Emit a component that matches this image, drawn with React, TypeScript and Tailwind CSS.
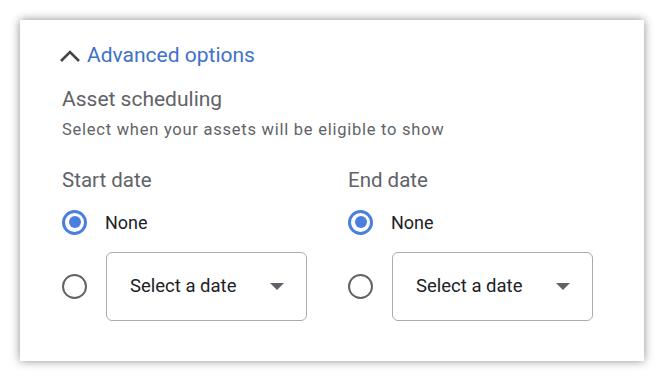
import React from "react";

function Radio({ checked }: { checked: boolean }) {
  return checked ? (
    <span className="flex h-[25px] w-[25px] shrink-0 items-center justify-center rounded-full border-[3px] border-[#4a7fe0]">
      <span className="h-[12px] w-[12px] rounded-full bg-[#4a7fe0]" />
    </span>
  ) : (
    <span className="h-[25px] w-[25px] shrink-0 rounded-full border-[2.5px] border-[#606368]" />
  );
}

function DateColumn({ label }: { label: string }) {
  return (
    <div className="flex w-[286px] flex-col">
      <div className="text-[20.5px] leading-[24px] text-[#5f6368]">{label}</div>
      <div className="mt-[16px] flex h-[28px] items-center">
        <Radio checked />
        <span className="ml-[18px] text-[18px] text-[#202124]">None</span>
      </div>
      <div className="mt-[16px] flex items-center">
        <Radio checked={false} />
        <div className="ml-[19px] flex h-[69px] w-[201px] items-center justify-between rounded-[6px] border border-[#a8abb0] pl-[23px] pr-[22px]">
          <span className="text-[18.5px] text-[#202124]">Select a date</span>
          <svg width="14" height="7" viewBox="0 0 14 7">
            <path d="M0 0 L14 0 L7 7 Z" fill="#5f6368" />
          </svg>
        </div>
      </div>
    </div>
  );
}

export default function App() {
  return (
    <div className="h-[381px] w-[664px] bg-white pl-[20px] pt-[20px] font-['Roboto',sans-serif]">
      <div className="flex h-[341px] w-[624px] flex-col bg-white pl-[42px] pt-[24px] shadow-[0_0_9px_rgba(0,0,0,0.45)]">
        {/* Toggle */}
        <div className="flex h-[24px] items-center">
          <svg width="22" height="14" viewBox="0 0 22 14" className="-ml-[3px]">
            <path d="M2 12 L11 3 L20 12" fill="none" stroke="#454545" strokeWidth="2.6" />
          </svg>
          <span className="ml-[6px] text-[21px] text-[#3d72c9]">Advanced options</span>
        </div>

        <div className="mt-[19px] text-[21px] leading-[24px] text-[#5f6368]">Asset scheduling</div>
        <div className="mt-[9px] text-[16.5px] leading-[20px] tracking-[0.75px] text-[#5f6368]">
          Select when your assets will be eligible to show
        </div>

        <div className="mt-[28px] flex">
          <DateColumn label="Start date" />
          <DateColumn label="End date" />
        </div>
      </div>
    </div>
  );
}
